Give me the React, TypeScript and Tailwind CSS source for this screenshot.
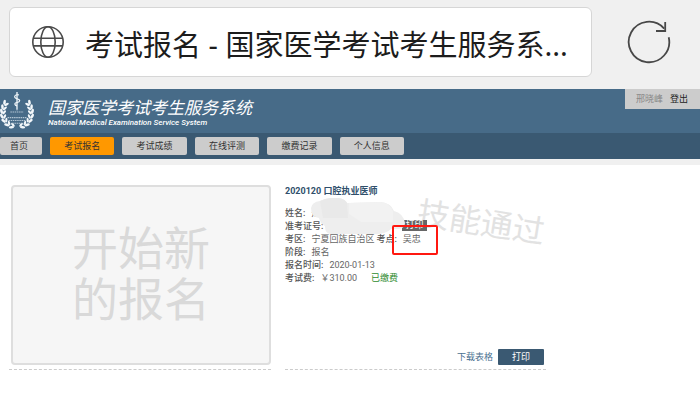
import { clsx } from 'clsx';

const navItems = ['首页', '考试报名', '考试成绩', '在线评测', '缴费记录', '个人信息'];

function GlobeIcon() {
  return (
    <svg viewBox="0 0 34 34" className="size-[34px] shrink-0" fill="none" stroke="#4a4a4a" strokeWidth="1.6">
      <circle cx="17" cy="17" r="15.2" />
      <ellipse cx="17" cy="17" rx="7.2" ry="15.2" />
      <path d="M2.200 13.300h29.600M2.200 20.900h29.600" />
    </svg>
  );
}

function ReloadIcon() {
  return (
    <svg viewBox="0 0 44 44" className="size-11" fill="none" stroke="#484848" strokeWidth="1.8">
      <path d="M41.700 17.300A20.250 20.250 0 1 1 37.200 8.600" />
      <path d="M38.200 2V11H29" />
    </svg>
  );
}

function Emblem() {
  const leaves = [
    [12, 37, 70],
    [7.5, 34.5, 45],
    [4.5, 30.5, 25],
    [3, 26, 5],
    [2.8, 21, -10],
    [3.8, 16.5, -20],
    [6, 12, -35],
  ];
  return (
    <svg viewBox="0 0 36 42" className="h-[40px] w-[34px] shrink-0" fill="#f2f7fa">
      {[false, true].map((flip) => (
        <g key={String(flip)} transform={flip ? 'translate(36 0) scale(-1 1)' : undefined}>
          {leaves.map(([x, y, r]) => (
            <g key={y} transform={`translate(${x} ${y}) rotate(${-r})`}>
              <ellipse cx="-1.2" cy="0" rx="1.4" ry="2.8" transform="rotate(-25)" />
              <ellipse cx="2.2" cy="0" rx="1.2" ry="2.6" transform="rotate(30)" />
            </g>
          ))}
        </g>
      ))}
      <path d="M17.300 1h1.400v18l-.7 2-.7-2z" />
      <path
        d="M20 4c-5-1-6 3-2 4s3.500 3.500 0 4-2.500 3 0 3.500"
        fill="none"
        stroke="#f2f7fa"
        strokeWidth="1.3"
      />
      <path
        d="M11 22h14M8 28h20M9 31h18M13 34h10"
        fill="none"
        stroke="#b4c6d4"
        strokeWidth="1.2"
        strokeDasharray="1.600 .7"
      />
    </svg>
  );
}

function Label({ children }: { children: string }) {
  return <dt className="font-medium text-[#555]">{children}</dt>;
}

function BrowserBar() {
  return (
    <div className="flex h-[89px] items-center bg-[#f0f0f0] pb-[5px] pl-[9px] pr-[29px]">
      <div className="flex h-[70px] min-w-0 flex-1 items-center gap-5 rounded-md border border-[#d6d6d6] bg-white pl-[21px] pr-3">
        <GlobeIcon />
        <input
          type="text"
          readOnly
          aria-label="网址"
          value="考试报名 - 国家医学考试考生服务系..."
          className="min-w-0 flex-1 bg-transparent pt-[2px] font-['Noto_Sans','Noto_Sans_CJK_SC',sans-serif] text-[29px] text-[#1c1c1c] outline-none"
        />
      </div>
      <button type="button" aria-label="刷新" className="ml-[35px]">
        <ReloadIcon />
      </button>
    </div>
  );
}

function SiteHeader() {
  return (
    <header className="border-b-[6px] border-[#f0f0f0] bg-[#476b88]">
      <div className="flex h-11 items-start justify-between">
        <div className="flex items-center gap-[14px] pt-[2px]">
          <Emblem />
          <div className="pt-1 italic text-white">
            <h1 className="text-[17px] leading-5">国家医学考试考生服务系统</h1>
            <p className="text-[8px] font-medium leading-[10px]">
              National Medical Examination Service System
            </p>
          </div>
        </div>
        <div className="flex h-5 items-center gap-[7px] bg-[#ccc] pl-[11px] pr-3">
          <span className="text-[#888]">邢晓峰</span>
          <a href="#logout" className="text-[#222]">登出</a>
        </div>
      </div>
      <nav className="h-[26px] bg-[#3a5972] pt-1">
        <div className="flex w-[404px] gap-2">
          {navItems.map((item, i) => (
            <button
              key={item}
              type="button"
              className={clsx(
                'h-[18px] rounded-[2px] text-[#333]',
                i === 0 ? 'w-[42px] pr-1' : 'flex-1',
                i === 1 ? 'bg-[#ff9800]' : 'bg-[#ccc]'
              )}
            >
              {item}
            </button>
          ))}
        </div>
      </nav>
    </header>
  );
}

function ExamCard() {
  return (
    <section className="relative flex w-[261px] flex-col border-b border-dashed border-[#ccc]">
      <span className="absolute left-[132px] top-[22px] rotate-[9deg] whitespace-nowrap text-[32px] leading-8 text-[#e2e2e2]">
        技能通过
      </span>
      <h2 className="font-bold text-[#2f4f6b]">2020120 口腔执业医师</h2>
      <dl className="mt-[9px] text-[#666]">
        <div className="flex gap-[6px]">
          <Label>姓名:</Label>
          <dd>邢</dd>
        </div>
        <div className="flex">
          <Label>准考证号:</Label>
          <dd className="relative ml-auto mr-[119px]">
            <button type="button" className="block h-[11px] w-[25px] bg-[#666] leading-[11px] text-white">
              打印
            </button>
          </dd>
        </div>
        <div className="flex gap-[6px]">
          <Label>考区:</Label>
          <dd className="-mr-1">宁夏回族自治区</dd>
          <Label>考点:</Label>
          <dd className="relative">吴忠</dd>
        </div>
        <div className="flex gap-[6px]">
          <Label>阶段:</Label>
          <dd>报名</dd>
        </div>
        <div className="flex gap-[6px]">
          <Label>报名时间:</Label>
          <dd>2020-01-13</dd>
        </div>
        <div className="flex gap-[6px]">
          <Label>考试费:</Label>
          <dd>￥310.00</dd>
          <dd className="ml-2 text-[#2e8b2e]">已缴费</dd>
        </div>
      </dl>
      <div className="mb-1 mt-auto flex items-center justify-end gap-[5px] pr-[2px]">
        <a href="#download" className="text-[#4a7090]">下载表格</a>
        <button type="button" className="h-4 w-[46px] rounded-[1px] bg-[#3a5972] text-white">
          打印
        </button>
      </div>

      {/* smudge over the name and ticket number */}
      <svg viewBox="0 0 94 38" className="absolute left-[26px] top-[13px] h-[38px] w-[94px]">
        <path
          d="M0 10Q1 4 9 3Q17 -1 28 0Q34 1 36 5L70 4Q80 5 83 13Q92 15 94 25Q94 30 88 31L80 31Q74 37 62 36L20 36Q14 36 14 28Q9 25 8 20Q0 19 0 10z"
          fill="#eee"
        />
        <path d="M9 3Q17 -1 28 0Q34 1 36 5L37 20H12z" fill="#e9e9e9" />
        <path d="M38 5L70 4Q79 5 82 13V24H50L38 16z" fill="#f2f2f2" />
      </svg>
      <div className="absolute left-[107px] top-[40px] h-[30px] w-[46px] rounded-[2px] border-2 border-[#ff1810]" />
    </section>
  );
}

export default function App() {
  return (
    <div className="min-h-screen bg-white font-[Roboto,'Noto_Sans_CJK_SC',sans-serif] text-[9px] leading-[13px]">
      <BrowserBar />
      <SiteHeader />
      <main className="flex gap-[14px] pl-[9px] pt-5">
        <div className="w-[262px] border-b border-dashed border-[#ccc] pb-1 pl-[2px]">
          <button
            type="button"
            className="flex h-[180px] w-full items-center justify-center rounded border-2 border-[#dedede] bg-[#f6f6f6] text-[46px] leading-[51px] text-[#d9d9d9]"
          >
            <span>
              开始新
              <br />
              的报名
            </span>
          </button>
        </div>
        <ExamCard />
      </main>
    </div>
  );
}
